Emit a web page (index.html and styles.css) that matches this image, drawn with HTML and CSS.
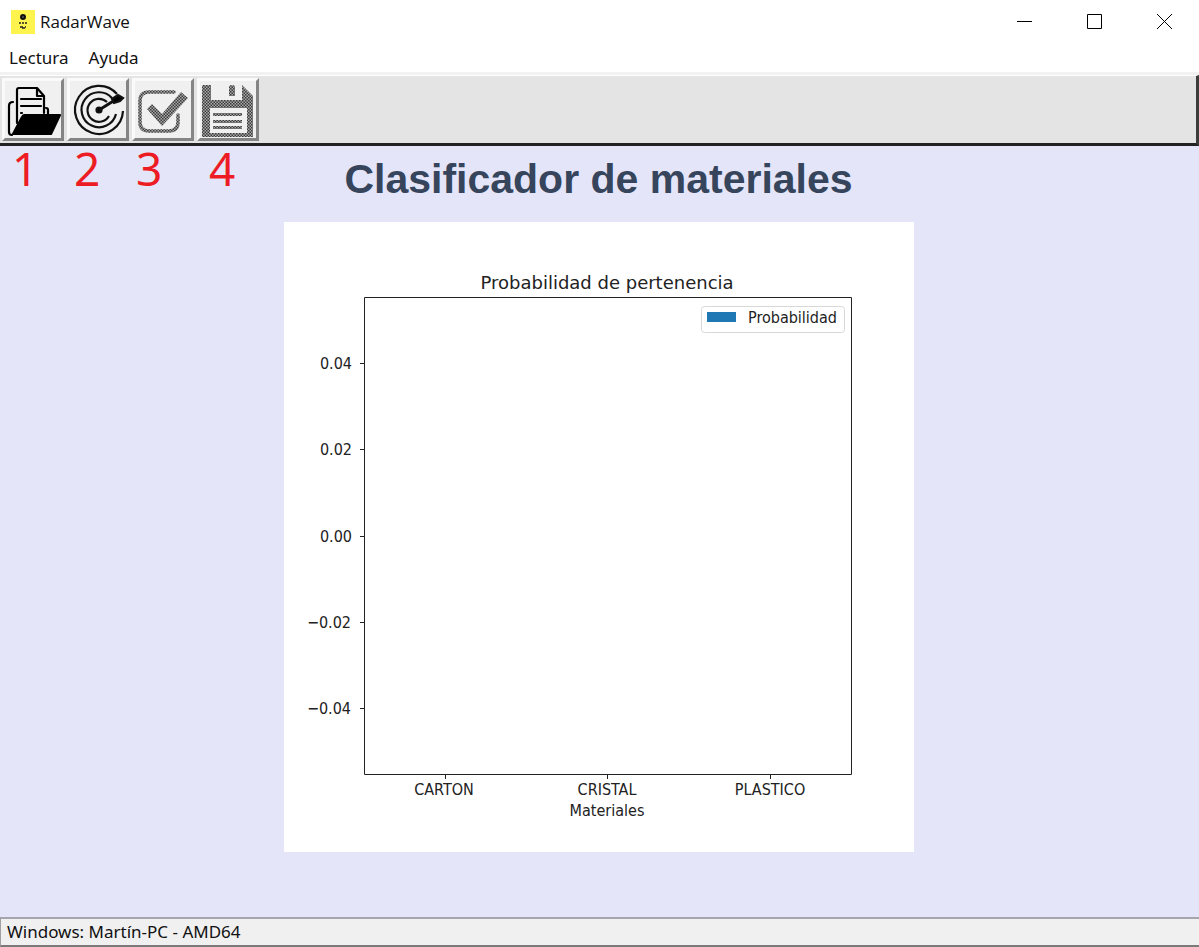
FILE: index.html
```html
<!DOCTYPE html>
<html lang="es">
<head>
<meta charset="utf-8">
<title>RadarWave</title>
<link rel="stylesheet" href="styles.css">
</head>
<body>
<div class="window">
  <header class="titlebar">
    <svg class="app-icon" viewBox="0 0 24 24" aria-hidden="true">
      <path fill="#fff34d" d="M0 0h24v24H0z"/>
      <circle cx="12" cy="7" r="3" fill="#111"/>
      <path d="M8 13h2m1 0h2m1 0h2M9 17h3m2 0h1M11 18h3" stroke="#222" stroke-width="1.5"/>
      <path d="M11 7h2" stroke="#777"/>
    </svg>
    <span class="app-name">RadarWave</span>
    <div class="controls">
      <button class="control" aria-label="Minimizar"><svg viewBox="0 0 15 15"><path d="M0 7.5h15"/></svg></button>
      <button class="control" aria-label="Maximizar"><svg viewBox="0 0 15 15"><path d="M.5.5h14v14H.5z"/></svg></button>
      <button class="control" aria-label="Cerrar"><svg viewBox="0 0 15 15"><path d="M0 0l15 15M15 0L0 15"/></svg></button>
    </div>
  </header>

  <nav class="menubar">
    <button class="menu">Lectura</button>
    <button class="menu">Ayuda</button>
  </nav>

  <div class="toolbar" role="toolbar">
    <button class="tool" aria-label="Abrir">
      <svg viewBox="0 0 56 56" fill="none" stroke="#000" stroke-width="2.2" stroke-linejoin="round" stroke-linecap="round">
        <path d="M12 41V8q0-2 2-2h18l7 8v17M32 6v8h7"/>
        <path d="M16 17h20M16 24h20M16 31h1"/>
        <path d="M8 20q-4 0-4 4v26q0 3 3 3M41 26q2 0 2 2v4"/>
        <path d="M19 33h36L46 52H8l9-17q1-2 2-2z" fill="#000"/>
      </svg>
    </button>
    <button class="tool" aria-label="Radar">
      <svg viewBox="0 0 56 56" fill="none" stroke="#111" stroke-width="2.2">
        <path d="M47 12A24 24 0 1 0 53 29"/>
        <path d="M42 16A17.500 17.500 0 1 0 46 32"/>
        <path d="M37 20A11.500 11.500 0 1 0 39 34"/>
        <circle cx="29" cy="28" r="2.500" fill="#000"/>
        <path d="M29 28L45 18" stroke-width="3"/>
        <path d="M42 17l6-4 5 3-3 3-6 2z" fill="#000"/>
      </svg>
    </button>
    <button class="tool" aria-label="Validar" disabled>
      <svg viewBox="0 0 56 56" fill="none">
        <defs>
          <pattern id="stipple" width="3" height="3" patternUnits="userSpaceOnUse">
            <path fill="#a8a8a8" d="M0 0h3v3H0z"/>
            <path fill="#3c3c3c" d="M0 0h1.500v1.500H0zM1.500 1.500H3V3H1.500z"/>
          </pattern>
        </defs>
        <path d="M39 10H14Q5 10 5 19v21q0 9 9 9h20q9 0 9-9v-7" stroke="url(#stipple)" stroke-width="3.500" stroke-linecap="round"/>
        <path d="M12 27l5-5 10 10L46 10l7 6-26 28z" fill="url(#stipple)"/>
      </svg>
    </button>
    <button class="tool" aria-label="Guardar" disabled>
      <svg viewBox="0 0 56 56">
        <path fill="url(#stipple)" fill-rule="evenodd" d="M3 3h8v15h31V3l11 11v41H2V5q0-2 1-2zM10 26v25h37V26z"/>
        <path fill="url(#stipple)" d="M29 5q0-2 3-2t3 2v9H29z"/>
        <path d="M13 31h29v3H13zM13 38h29v3H13zM13 44h29v3H13z" fill="url(#stipple)"/>
      </svg>
    </button>
  </div>

  <main class="content">
    <div class="steps">
      <span class="step">1</span>
      <span class="step">2</span>
      <span class="step">3</span>
      <span class="step">4</span>
    </div>
    <h1 class="heading">Clasificador de materiales</h1>
    <svg class="chart" viewBox="0 0 630 630" role="img" aria-label="Probabilidad de pertenencia">
      <text class="chart-title" x="323" y="67">Probabilidad de pertenencia</text>
      <path class="axes" d="M80.500 75.500h487v477h-487z"/>
      <path class="axes" d="M76 141.500h4M76 227.500h4M76 314.500h4M76 400.500h4M76 486.500h4M161.500 553v4M323.500 553v4M486.500 553v4"/>
      <g class="y-labels">
        <text x="68" y="147">0.04</text>
        <text x="68" y="233">0.02</text>
        <text x="68" y="320">0.00</text>
        <text x="67" y="406">−0.02</text>
        <text x="67" y="492">−0.04</text>
      </g>
      <g class="x-labels">
        <text x="160" y="573">CARTON</text>
        <text x="323" y="573">CRISTAL</text>
        <text x="486" y="573">PLASTICO</text>
        <text x="323" y="594">Materiales</text>
      </g>
      <rect class="legend" x="417.500" y="84.500" width="143" height="26" rx="3"/>
      <path fill="#1f77b4" d="M423 90h29v10h-29z"/>
      <text x="464" y="101">Probabilidad</text>
    </svg>
  </main>

  <footer class="statusbar">Windows: Martín-PC - AMD64</footer>
</div>
</body>
</html>
```
FILE: styles.css
```css
* { box-sizing: border-box; }

body {
  margin: 0;
  font-family: "Noto Sans", "Open Sans", sans-serif;
  color: #111;
}

button {
  font: inherit;
  color: inherit;
  border: 0;
  padding: 0;
  background: none;
}

.window {
  display: flex;
  flex-direction: column;
  min-height: 100vh;
  background: #fff;
}

.titlebar {
  display: flex;
  align-items: center;
  height: 43px;
  padding-left: 11px;
  gap: 5px;
  font-family: "Open Sans", sans-serif;
  font-size: 17px;
}

.app-icon {
  width: 24px;
  height: 24px;
}

.controls {
  display: flex;
  margin-left: auto;
}

.control {
  display: grid;
  place-items: center;
  width: 70px;
  height: 43px;
}

.control svg {
  width: 15px;
  height: 15px;
  fill: none;
  stroke: #000;
}

.menubar {
  display: flex;
  gap: 20px;
  height: 32px;
  padding: 1px 9px 0;
  border-bottom: 3px solid #f2f2f2;
  font-size: 17px;
  line-height: 28px;
}

.toolbar {
  display: flex;
  gap: 3px;
  padding: 2px;
  background: #e4e4e4;
  border: solid;
  border-width: 1px 3px 3px 0;
  border-color: #fff #3c3c3c #222 #fff;
}

.tool {
  display: grid;
  place-items: center;
  width: 62px;
  height: 63px;
  background: #f0f0f0;
  border: 3px solid;
  border-color: #fafafa #858585 #858585 #fafafa;
}

.tool svg {
  width: 56px;
  height: 56px;
}

.content {
  position: relative;
  display: flex;
  flex: 1;
  flex-direction: column;
  align-items: center;
  padding-right: 2px;
  background: #e4e5f9;
}

.steps {
  position: absolute;
  top: 0;
  left: 12px;
  display: grid;
  grid-template-columns: 62px 62px 73px 28px;
  font-size: 46px;
  line-height: 44px;
  color: #ed1c24;
}

.heading {
  margin: 9px 0 18px;
  font: bold 41px/49px "Liberation Sans", Arial, sans-serif;
  color: #36455c;
}

.chart {
  width: 53%;
  max-width: 630px;
  min-width: 320px;
  background: #fff;
  font-family: "DejaVu Sans Condensed", "DejaVu Sans", sans-serif;
  font-size: 16px;
  fill: #222;
}

.chart-title {
  font-family: "DejaVu Sans", sans-serif;
  font-size: 18px;
  text-anchor: middle;
}

.axes {
  fill: none;
  stroke: #222;
}

.x-labels { text-anchor: middle; }

.y-labels { text-anchor: end; }

.legend {
  fill: #fff;
  stroke: #d8d8d8;
}

.statusbar {
  height: 30px;
  padding-left: 6px;
  background: #f0f0f0;
  border-top: 2px solid #a5a5ad;
  border-bottom: 2px solid #7a7a7a;
  border-left: 1px solid #a0a0a0;
  font-size: 17px;
  line-height: 25px;
}
```
